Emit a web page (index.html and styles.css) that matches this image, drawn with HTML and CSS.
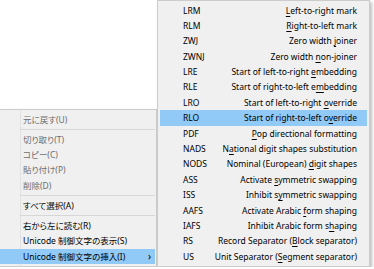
FILE: index.html
```html
<!DOCTYPE html>
<html lang="ja">
<head>
  <meta charset="UTF-8" />
  <title>Context menu</title>
  <link rel="stylesheet" href="styles.css">
</head>
<body>
  <div class="stage">
    <!-- main context menu, its left edge runs off the window -->
    <div class="menu menu-main">
      <div class="item disabled">元に戻す(U)</div>
      <div class="sep"></div>
      <div class="item disabled">切り取り(T)</div>
      <div class="item disabled">コピー(C)</div>
      <div class="item disabled">貼り付け(P)</div>
      <div class="item disabled">削除(D)</div>
      <div class="sep"></div>
      <div class="item">すべて選択(A)</div>
      <div class="sep"></div>
      <div class="item">右から左に読む(R)</div>
      <div class="item">Unicode 制御文字の表示(S)</div>
      <div class="item active">Unicode 制御文字の挿入(I)<span class="arrow">›</span></div>
    </div>

    <!-- submenu: Unicode control characters -->
    <div class="menu menu-sub">
      <div class="item"><span class="code">LRM</span><span class="label"><u>L</u>eft-to-right mark</span></div>
      <div class="item"><span class="code">RLM</span><span class="label"><u>R</u>ight-to-left mark</span></div>
      <div class="item"><span class="code">ZWJ</span><span class="label">Zero width <u>j</u>oiner</span></div>
      <div class="item"><span class="code">ZWNJ</span><span class="label">Zero width <u>n</u>on-joiner</span></div>
      <div class="item"><span class="code">LRE</span><span class="label">Start of left-to-right <u>e</u>mbedding</span></div>
      <div class="item"><span class="code">RLE</span><span class="label">Start of right-to-left e<u>m</u>bedding</span></div>
      <div class="item"><span class="code">LRO</span><span class="label">Start of left-to-right <u>o</u>verride</span></div>
      <div class="item active"><span class="code">RLO</span><span class="label">Start of right-to-left o<u>v</u>erride</span></div>
      <div class="item"><span class="code">PDF</span><span class="label"><u>P</u>op directional formatting</span></div>
      <div class="item"><span class="code">NADS</span><span class="label">N<u>a</u>tional digit shapes substitution</span></div>
      <div class="item"><span class="code">NODS</span><span class="label">Nominal (European) <u>d</u>igit shapes</span></div>
      <div class="item"><span class="code">ASS</span><span class="label">Activate <u>s</u>ymmetric swapping</span></div>
      <div class="item"><span class="code">ISS</span><span class="label">Inhibit s<u>y</u>mmetric swapping</span></div>
      <div class="item"><span class="code">AAFS</span><span class="label">Activate Arabic <u>f</u>orm shaping</span></div>
      <div class="item"><span class="code">IAFS</span><span class="label">Inhibit Arabic form s<u>h</u>aping</span></div>
      <div class="item"><span class="code">RS</span><span class="label">Record Separator (<u>B</u>lock separator)</span></div>
      <div class="item"><span class="code">US</span><span class="label">Unit Separator (<u>S</u>egment separator)</span></div>
    </div>
  </div>
</body>
</html>
```

FILE: styles.css
```css
*, *::before, *::after {
  box-sizing: border-box;
}
body {
  margin: 0;
  background: #fff;
  font-family: "Noto Sans", "Noto Sans CJK JP", sans-serif;
  font-size: 8.5px;
  color: #000;
  font-feature-settings: "palt";
}

.stage {
  display: flex;
  align-items: flex-start;
}

/* Menu boxes */
.menu {
  background: #f0f0f0;
  border: 1px solid #cccccc;
  box-shadow: 2px 2px 3px rgba(0, 0, 0, 0.25);
  padding: 1.5px 2px;
}
.menu-main {
  width: 157px;
  margin-top: 109px;
  border-left: none;
  padding-left: 0;
  padding-right: 1px;
  background:
    linear-gradient(to right, transparent 20px, #e2e2e2 20px, #e2e2e2 21px, transparent 21px),
    #f0f0f0;
}
.menu-sub {
  width: 213px;
  position: relative;
  z-index: 1;
}

/* Rows */
.item {
  height: 15.4px;
  line-height: 15.4px;
  padding-left: 23px;
  white-space: nowrap;
  display: flex;
  align-items: center;
}
.item.disabled {
  color: #6d6d6d;
}
.item.active {
  background: #91c9f7;
}
.menu-sub .item {
  padding-left: 23px;
  padding-right: 10px;
}
.item .label {
  margin-left: auto;
}
.item u {
  text-decoration-thickness: 1px;
  text-underline-offset: 1.5px;
}
.arrow {
  margin-left: auto;
  margin-right: 4px;
  font-size: 10px;
}

.sep {
  height: 1px;
  margin: 2px 0 1.7px 20px;
  background: #d7d7d7;
}
```
